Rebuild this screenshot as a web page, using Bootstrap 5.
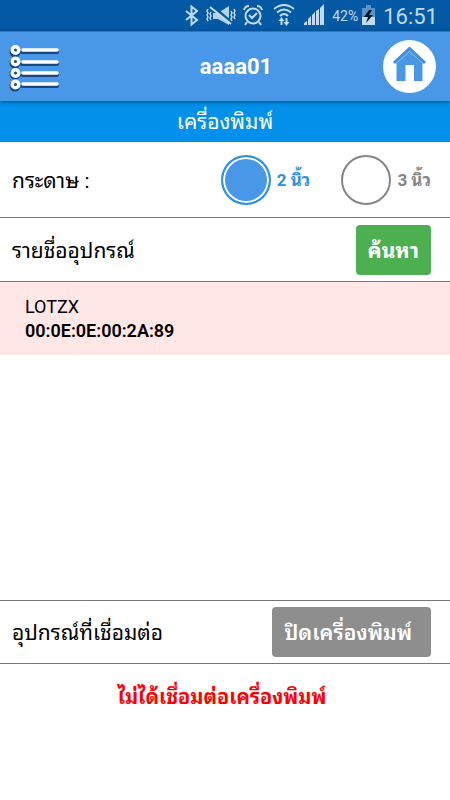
<!DOCTYPE html>
<html lang="th">
<head>
<meta charset="utf-8">
<meta name="viewport" content="width=device-width, initial-scale=1">
<title>เครื่องพิมพ์</title>
<link href="https://cdn.jsdelivr.net/npm/bootstrap@5.3.0/dist/css/bootstrap.min.css" rel="stylesheet">
<style>
body { font-family: Roboto, "Droid Sans Thai", "Noto Sans Thai Looped", "Noto Looped Thai", Loma, Waree, "Noto Sans Thai", sans-serif; color: #000; font-size: 21px; line-height: 32px; }
.status-bar { height: 31px; background: #0359a3; color: #c3dbf0; font-size: 14px; line-height: 31px; padding-right: 12px; }
.status-bar .clock { font-size: 22px; padding-top: 2px; }
.status-bar .charge { padding-top: 2px; }
.app-header { height: 70px; background: #4998e7; box-shadow: 0 1px 4px rgba(0, 30, 70, .55); z-index: 1; border-top: 1px solid #3076bd; }
.app-title { font-size: 22px; line-height: 34px; padding-left: 28px; }
.page-title { height: 41px; background: #0290ea; font-size: 21px; line-height: 43px; }
.line-below { border-bottom: 1px solid #777; }
.line-above { border-top: 1px solid #777; }
.paper-row { height: 76px; }
.tool-row { height: 64px; }
.row-text { padding-top: 2px; }
.row-end { padding-right: 19px; }
.size-option { gap: 6px; }
.size-options { gap: 31px; }
.size-radio.form-check-input { width: 50px; height: 50px; margin: 0; border: 2px solid #858585; box-shadow: none; flex: none; }
.size-radio.form-check-input:checked { border-color: #2d90e8; background: #4998e7; box-shadow: inset 0 0 0 2px #fff; }
.size-label { font-size: 17px; line-height: 24px; color: #858585; }
.size-radio:checked + .size-label { color: #2d90e8; }
.action { height: 50px; border: 0; border-radius: 4px; padding: 0 12px; font-size: 21px; line-height: 52px; font-weight: 600; }
.action-search { background: #4caf50; font-weight: 700; }
.action-off { background: #8e8e8e; padding-right: 19px; }
.action-search:hover { background: #43a047; }
.action-off:hover { background: #7d7d7d; }
.device { background: #ffe7e6; padding: 13px 25px 12px; font-size: 18px; line-height: 24px; color: #000; }
.device-address { font-weight: 600; }
.notice { color: #f00; font-size: 20px; padding: 17px 18px 87px 12px; }
</style>
<script src="https://cdn.jsdelivr.net/npm/bootstrap@5.3.0/dist/js/bootstrap.bundle.min.js" defer></script>
</head>
<body class="min-vh-100 d-flex flex-column bg-white">
<div class="status-bar d-flex align-items-center justify-content-end">
  <svg width="142" height="31" viewBox="0 0 142 31" fill="none" stroke="#c3dbf0" aria-hidden="true">
    <path d="M4 11 15 20 9.500 24.500V6.500l5.500 4.500L4 20" stroke-width="2"/>
    <path d="M31 13h5l11-7v19l-11-6h-5z" fill="#b5d0e9" stroke="none"/>
    <path d="M30 6 50 23" stroke="#0359a3" stroke-width="3"/>
    <path d="M28 7 49 24" stroke-width="2"/>
    <path d="M26 9l-1 2 1 2-1 2 1 2-1 2 1 2M29 12l-1 2 1 2-1 2 1 2M49 11l1 2-1 2 1 2-1 2 1 2M52 9l1 2-1 2 1 2-1 2 1 2" stroke-width="1.500"/>
    <circle cx="71" cy="16" r="7.500" stroke-width="2"/>
    <path d="m67 15 3 3 5-5M65 22l-2 3M77 22l2 3" stroke-width="2"/>
    <path d="M62 10q1-4 5-4M75 6q4 0 5 4" stroke-width="2"/>
    <path d="M92 9q10-8 20 0M95 12.500q7-6 14 0M98 16q4-4 8 0" stroke-width="2"/>
    <path d="M99.500 25v-6M104.500 18v6" stroke-width="2"/><path d="m99.500 17-3 4h6zM104.500 26l-3-4h6z" fill="#c3dbf0" stroke="none"/>
    <path d="M122 25v-2l3-2v4zM126 25v-6l3-3v9zM130 25V15l3-3v13zM134 25V11l3-2v16zM138 25V8l4-4v21z" fill="#c3dbf0" stroke="none"/>
  </svg>
  <span class="charge ms-2">42%</span>
  <svg class="mx-1" width="13" height="31" viewBox="0 0 13 31" aria-hidden="true"><path d="M0 8h4V5h5v3h4v9H0z" fill="#5995ca"/><path d="M0 17h13v8H0z" fill="#c3dbf0"/><path d="M7 10 2 17h4l-2 6 7-8H7l3-5z" fill="#071622"/></svg>
  <span class="clock ms-1">16:51</span>
</div>
<header class="app-header position-relative d-flex align-items-center px-2">
  <button type="button" class="btn border-0 p-0 d-flex" aria-label="เมนู">
    <svg width="53" height="50" viewBox="0 0 53 50" aria-hidden="true">
      <g transform="translate(-1 1)" stroke="#17477c" fill="none"><path d="M15 9h35M15 21h35M15 32h35M15 43h35" stroke-width="4" stroke-linecap="round"/><g stroke-width="4"><circle cx="8" cy="9" r="3.500"/><circle cx="8" cy="20" r="3.500"/><circle cx="8" cy="31" r="3.500"/><circle cx="8" cy="43" r="3.500"/></g></g>
      <g stroke="#fff" fill="#164b86"><path d="M15 8h34M15 20h34M15 31h34M15 42h34" stroke-width="3.500" stroke-linecap="round"/><g stroke-width="3.500"><circle cx="7.500" cy="8" r="3.300"/><circle cx="7.500" cy="19.500" r="3.300"/><circle cx="7.500" cy="31" r="3.300"/><circle cx="7.500" cy="42.500" r="3.300"/></g></g>
    </svg>
  </button>
  <h1 class="app-title flex-grow-1 text-center m-0 text-white fw-bold">aaaa01</h1>
  <a href="#" class="d-flex me-1" aria-label="หน้าแรก">
    <svg width="55" height="54" viewBox="0 0 55 54" aria-hidden="true"><circle cx="26.500" cy="26.500" r="26.500" fill="#fff"/><path d="M13.500 22 26.500 10l13 12v19H31V25h-8.500v16h-9z" fill="#4998e7"/><path d="M11 23 26.500 8.500 42 23" fill="none" stroke="#3f8edf" stroke-width="3"/><path d="M13 23.500 26.500 11.500 40 23.500" fill="none" stroke="#a7cef5" stroke-width=".7"/></svg>
  </a>
</header>
<h2 class="page-title m-0 text-white text-center fw-normal" id="page-title">เครื่องพิมพ์</h2>
<main class="flex-grow-1 d-flex flex-column" aria-labelledby="page-title">
  <div class="paper-row row-end line-below d-flex align-items-center justify-content-between ps-2" role="radiogroup" aria-labelledby="paper">
    <span class="row-text ms-1" id="paper">กระดาษ :</span>
    <div class="size-options d-flex">
      <div class="size-option d-flex align-items-center">
        <input class="form-check-input size-radio" type="radio" name="paper" id="two" checked>
        <label class="size-label fw-bold" for="two">2 นิ้ว</label>
      </div>
      <div class="size-option d-flex align-items-center">
        <input class="form-check-input size-radio" type="radio" name="paper" id="three">
        <label class="size-label fw-bold" for="three">3 นิ้ว</label>
      </div>
    </div>
  </div>
  <div class="tool-row row-end line-below d-flex align-items-center justify-content-between ps-2">
    <span class="row-text ms-1">รายชื่ออุปกรณ์</span>
    <button type="button" class="btn action action-search text-white">ค้นหา</button>
  </div>
  <div class="flex-grow-1">
    <button type="button" class="device btn rounded-0 border-0 w-100 text-start">
      <span class="d-block">LOTZX</span>
      <span class="device-address d-block">00:0E:0E:00:2A:89</span>
    </button>
  </div>
  <div class="tool-row row-end line-below line-above d-flex align-items-center justify-content-between ps-2">
    <span class="row-text ms-1">อุปกรณ์ที่เชื่อมต่อ</span>
    <button type="button" class="btn action action-off text-white">ปิดเครื่องพิมพ์</button>
  </div>
  <p class="notice m-0 text-center fw-bold" role="status">ไม่ได้เชื่อมต่อเครื่องพิมพ์</p>
</main>
</body>
</html>
